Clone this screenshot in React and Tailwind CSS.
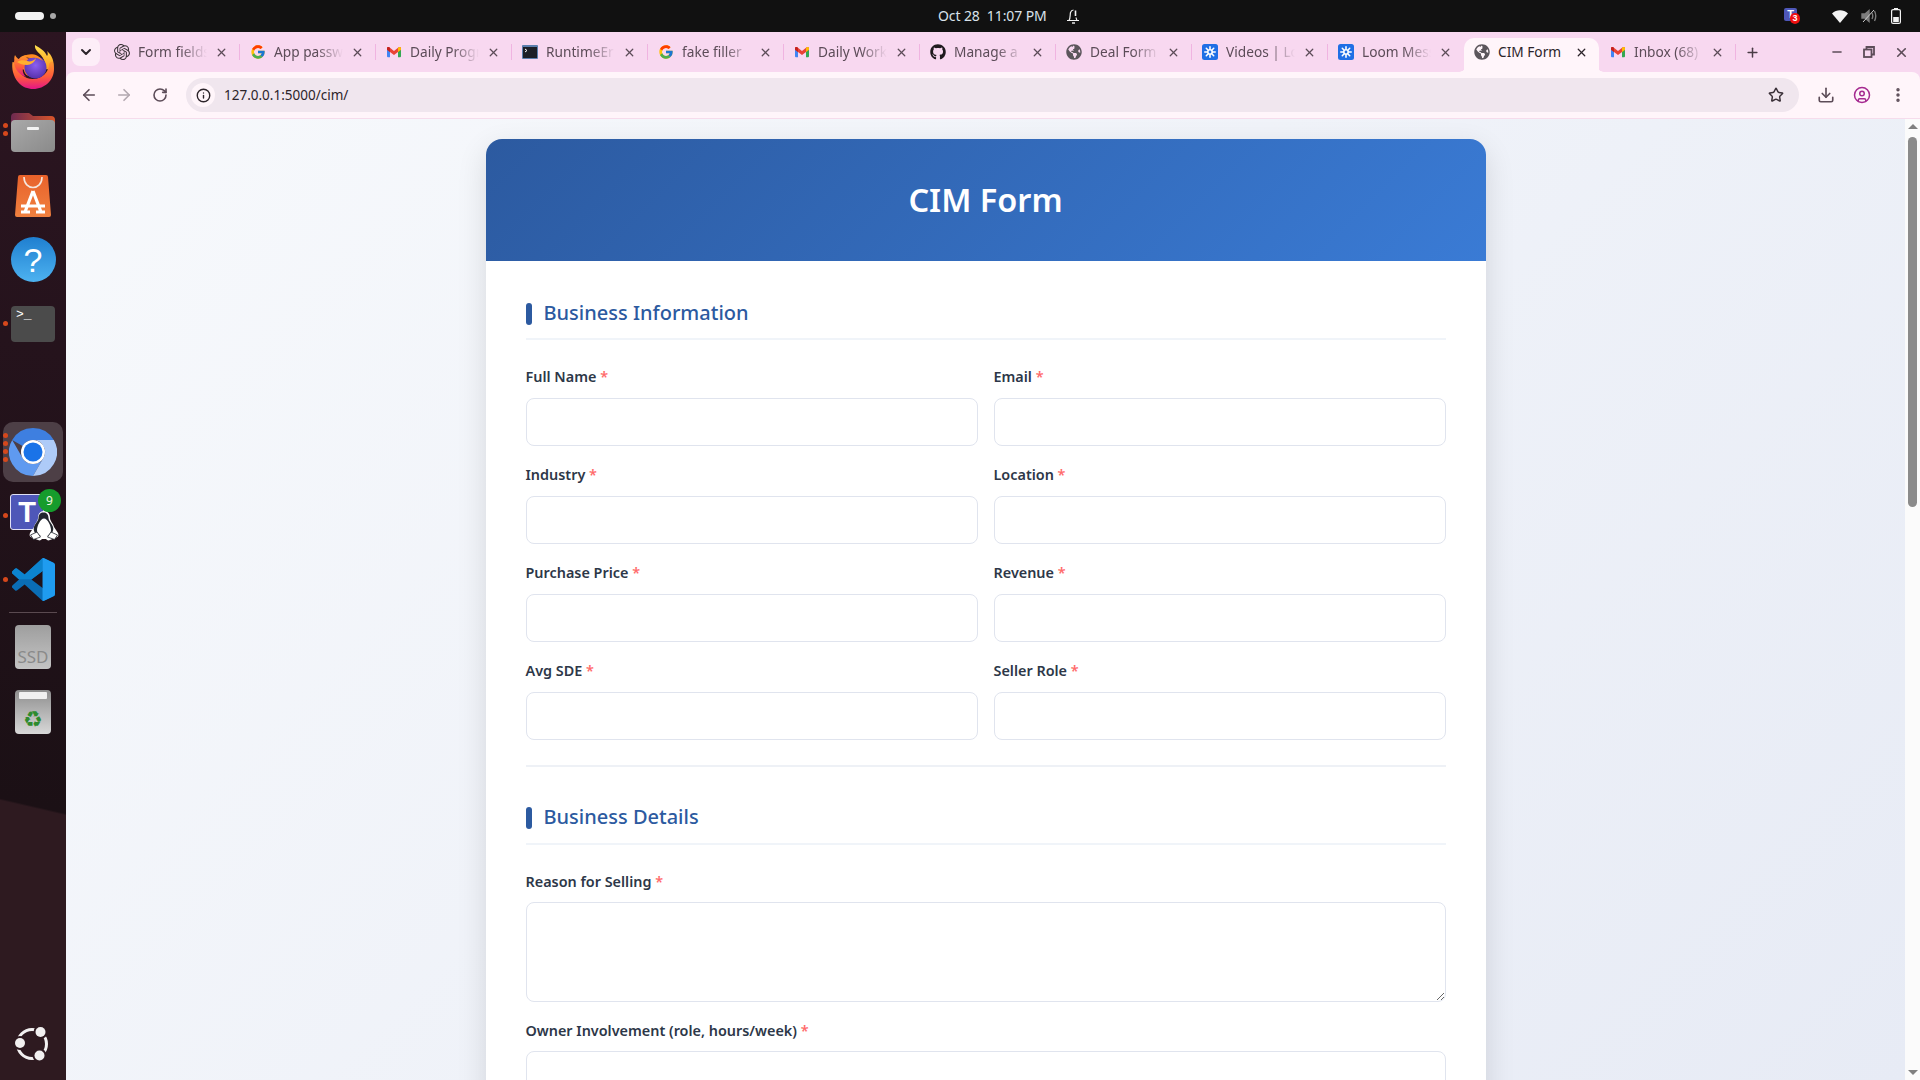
import React from "react";
import { ArrowLeft, ArrowRight, RotateCw, Star, Download, CircleUser, EllipsisVertical, X, Plus, Minus, Info, ChevronDown } from "lucide-react";
import { FcGoogle } from "react-icons/fc";
import { FaGithub, FaGlobeAmericas } from "react-icons/fa";
import { SiOpenai } from "react-icons/si";

const Gmail = () => (
  <svg viewBox="0 0 24 24" className="h-4 w-4">
    <path d="M1.5 7.5h4.5V20H3a1.5 1.5 0 0 1-1.5-1.5z" fill="#4285f4" />
    <path d="M18 7.5h4.5v11A1.5 1.5 0 0 1 21 20h-3z" fill="#34a853" />
    <path d="M1.5 6.5C1.5 4.5 3.5 4 5 5l7 5.5L19 5c1.5-1 3.5-.5 3.5 1.5v2L18 12l-6 4.5L6 12 1.5 8.5z" fill="#ea4335" />
    <path d="M18 6l1-1c1.500-1 3.500-.5 3.500 1.500v2L18 12z" fill="#fbbc04" />
    <path d="M1.500 6.500C1.500 4.500 3.500 4 5 5l1 1v6L1.500 8.500z" fill="#c5221f" />
  </svg>
);
const TerminalFav = () => (
  <svg viewBox="0 0 16 16" className="h-4 w-4">
    <rect x="0" y="1" width="16" height="14" rx="1" fill="#5b7fae" />
    <rect x="1" y="3" width="14" height="11" fill="#1d2027" />
    <path d="M3 5l2 1.500L3 8" stroke="#fff" fill="none" strokeWidth="1" />
  </svg>
);
const LoomFav = () => (
  <svg viewBox="0 0 16 16" className="h-4 w-4">
    <rect width="16" height="16" rx="2.500" fill="#1f6fe5" />
    <g stroke="#fff" strokeWidth="1.600" strokeLinecap="round">
      <path d="M8 2.800v2M8 11.200v2M2.800 8h2M11.200 8h2M4.300 4.300l1.400 1.400M10.300 10.300l1.400 1.400M4.300 11.700l1.400-1.400M10.300 5.700l1.400-1.400" />
    </g>
    <circle cx="8" cy="8" r="3" fill="#fff" />
    <circle cx="8" cy="8" r="1.400" fill="#1f6fe5" />
  </svg>
);
const Globe = () => <FaGlobeAmericas className="h-4 w-4 text-[#5c565c]" />;

const tabs = [
  { t: "Form fields", i: <SiOpenai className="h-4 w-4 text-[#3a3438]" /> },
  { t: "App passwords", i: <FcGoogle className="h-4 w-4" /> },
  { t: "Daily Progress", i: <Gmail /> },
  { t: "RuntimeError", i: <TerminalFav /> },
  { t: "fake filler", i: <FcGoogle className="h-4 w-4" /> },
  { t: "Daily Work", i: <Gmail /> },
  { t: "Manage a", i: <FaGithub className="h-4 w-4 text-[#1f1a1e]" /> },
  { t: "Deal Form", i: <Globe /> },
  { t: "Videos | Loom", i: <LoomFav /> },
  { t: "Loom Message", i: <LoomFav /> },
  { t: "CIM Form", i: <Globe />, active: true },
  { t: "Inbox (68)", i: <Gmail /> },
];

function Tab({ t, i, active, hideSep }) {
  return (
    <div className="flex h-[34px] w-[136px] shrink-0 items-center">
      <div className={"relative flex h-[34px] w-[135px] items-center pb-[6px] pl-[10px] pr-[10px] " + (active ? "rounded-t-[10px] bg-[#fff5fa] " : "")}>
        {active && (
          <>
            <span className="absolute bottom-0 left-[-5px] h-2 w-2 bg-[radial-gradient(circle_at_0_0,transparent_7.5px,#fff5fa_8px)]" />
            <span className="absolute bottom-0 right-[-5px] h-2 w-2 bg-[radial-gradient(circle_at_100%_0,transparent_7.5px,#fff5fa_8px)]" />
          </>
        )}
        <span className="flex h-4 w-4 shrink-0 items-center justify-center">{i}</span>
        <span className={"ml-2 w-[69px] shrink-0 overflow-hidden whitespace-nowrap text-[13.7px] " + (active ? "text-[#2c242a]" : "text-[#5c4c58] [mask-image:linear-gradient(to_right,black_62%,transparent_100%)]")}>
          {t}
        </span>
        <X className={"ml-2 h-[13px] w-[13px] shrink-0 " + (active ? "text-[#2c242a]" : "text-[#5c4c58]")} strokeWidth={2.4} />
      </div>
      <span className={"mb-[6px] h-4 w-px shrink-0 " + (hideSep ? "bg-transparent" : "bg-[#f0b4e1]")} />
    </div>
  );
}

const Firefox = () => (
  <svg viewBox="0 0 44 44" className="h-11 w-11">
    <defs>
      <linearGradient id="ffb" x1="0" y1="0" x2="0" y2="1">
        <stop offset="0" stopColor="#ff9a2e" />
        <stop offset="0.55" stopColor="#ff5a3c" />
        <stop offset="1" stopColor="#e31587" />
      </linearGradient>
      <linearGradient id="ffy" x1="0" y1="0" x2="0" y2="1">
        <stop offset="0" stopColor="#ffe14d" />
        <stop offset="1" stopColor="#ff9a1f" />
      </linearGradient>
      <radialGradient id="ffp" cx="0.5" cy="0.4" r="0.7">
        <stop offset="0" stopColor="#8b5ff0" />
        <stop offset="1" stopColor="#4f2aa0" />
      </radialGradient>
    </defs>
    <path d="M3 11c1 2 1 4 3 5 2-3 6-5 9-5-2 2-1 3 1 3 8-3 16 2 16 9 0 6-5 9-10 9-6 0-9-4-9-7L4 17z" fill="#ff7a2a" />
    <path d="M24 0c-1 6 6 8 9 15 2 5 1 9 1 9l8 1c2-8-1-15-6-19 1 2 1 4 0 5-2-5-7-8-12-11z" fill="url(#ffy)" />
    <path d="M1.500 17C.5 23 2 31 7 37c4 5 10 7 15 7 12 0 21-9 21-20 0-3-.5-5-1-7-1-1-3 0-4 2 0 8-7 15-16 15-9 0-14-6-15-12C6 19 3 17 1.500 17z" fill="url(#ffb)" />
    <path d="M3 17c1-3 0-5 1-7 1 2 3 4 4 4 2-3 5-4 8-4-1 1-1 2 0 3 3 1 1 3-1 4l-1 4c-4 3-2 8 1 11-6-2-12-8-12-15z" fill="url(#ffb)" />
    <circle cx="24.500" cy="22.500" r="11" fill="url(#ffp)" />
    <path d="M6 17c3-2 7-2 10-1 3 1 7 0 9-3-1 4-5 7-9 7-4 0-7-1-10-3z" fill="#ffb02e" />
    <path d="M13 11c5-3 14-3 19 5-4-3-8-4-11-3-3 0-5 0-8-2z" fill="#ff8a1f" />
  </svg>
);
const Folder = () => (
  <svg viewBox="0 0 44 40" className="h-10 w-11">
    <defs>
      <linearGradient id="fo" x1="0" y1="0" x2="1" y2="0">
        <stop offset="0" stopColor="#6e2a50" />
        <stop offset="1" stopColor="#d9552a" />
      </linearGradient>
      <linearGradient id="fg" x1="0" y1="0" x2="1" y2="1">
        <stop offset="0" stopColor="#a9a9a9" />
        <stop offset="1" stopColor="#8a8a8a" />
      </linearGradient>
    </defs>
    <path d="M0 5a4 4 0 0 1 4-4h14l4 3h18a4 4 0 0 1 4 4v12H0z" fill="url(#fo)" />
    <rect x="0" y="8" width="44" height="32" rx="4" fill="url(#fg)" />
    <rect x="16" y="15" width="12" height="3" rx="1" fill="#f2f2f2" />
  </svg>
);
const Store = () => (
  <svg viewBox="0 0 36 42" className="h-[42px] w-9">
    <defs>
      <linearGradient id="st" x1="0" y1="0" x2="0" y2="1">
        <stop offset="0" stopColor="#e8622b" />
        <stop offset="1" stopColor="#f0803f" />
      </linearGradient>
    </defs>
    <path d="M3 2a2 2 0 0 1 2-2h26a2 2 0 0 1 2 2l3 38a2 2 0 0 1-2 2H2a2 2 0 0 1-2-2z" fill="url(#st)" />
    <path d="M9 2c0 14 18 14 18 0" fill="none" stroke="#f5e6dc" strokeWidth="1.600" />
    <path d="M18 16L10 37M18 16l8 21M6 31h24M15 37H6M30 37h-9" stroke="#fff" strokeWidth="3.200" fill="none" />
  </svg>
);
const Chromium = () => (
  <svg viewBox="0 0 48 48" className="h-12 w-12">
    <path d="M24 0A24 24 0 0 1 44.800 12H24a12 12 0 0 0-10.400 6L3.200 12A24 24 0 0 1 24 0z" fill="#3e7fe0" />
    <path d="M3.200 12A24 24 0 0 0 24 48l10.400-18a12 12 0 0 1-20.800 0z" fill="#5f9af0" />
    <path d="M44.800 12A24 24 0 0 1 24 48l10.400-18A12 12 0 0 0 24 12z" fill="#aecbf8" />
    <circle cx="24" cy="24" r="12" fill="#fff" />
    <circle cx="24" cy="24" r="9.500" fill="#1a73e8" />
  </svg>
);
const Teams = () => (
  <div className="relative h-[52px] w-12">
    <div className="absolute left-0 top-[5px] flex h-9 w-[34px] items-center justify-center rounded-[3px] border border-[#dfe0f5] bg-[#4e57b8] font-['Liberation_Sans',sans-serif] text-[29px] font-bold leading-none text-white">T</div>
    <svg viewBox="0 0 30 30" className="absolute left-[19px] top-[22px] h-[30px] w-[30px]">
      <path d="M15 0c4 0 6 3 6 7 0 3 3 5 4 9l4 6c1 3 0 4-3 5l-5 2c-2 1-3 0-4-1h-4c-1 1-2 2-4 1l-5-2c-3-1-4-2-3-5l4-6c1-4 4-6 4-9 0-4 2-7 6-7z" fill="#fff" />
      <path d="M15 1.500c3 0 4.500 2.500 4.500 5.500 0 3 3.500 5.500 4.500 9 1 3-1 7-3 8-2 1-11 1-13 0-2-1-4-5-3-8 1-3.500 4.500-6 4.500-9 0-3 1.500-5.500 4.500-5.500z" fill="#22262e" />
      <path d="M15 7.500c3.500 0 7 7.500 7 11.500s-3.500 6.500-7 6.500-7-2.500-7-6.500 3.500-11.500 7-11.500z" fill="#fff" />
      <path d="M1.500 24l6.500-3 3.500 5-7 2.500zM28.500 24l-6.500-3-3.500 5 7 2.500z" fill="#fff" stroke="#22262e" strokeWidth=".8" />
    </svg>
    <div className="absolute left-[28px] top-0 flex h-[23px] w-[23px] items-center justify-center rounded-full bg-[#169c2c] font-['Noto_Sans',sans-serif] text-[12px] text-[#f4f4e0]">9</div>
  </div>
);
const VSCode = () => (
  <svg viewBox="0 0 100 100" className="h-[43px] w-[43px]">
    <defs>
      <clipPath id="vr"><rect x="71" y="0" width="29" height="100" /></clipPath>
      <clipPath id="vt"><rect x="0" y="0" width="71" height="50" /></clipPath>
    </defs>
    <path d="M96.500 10.800 75.900.9a6.200 6.200 0 0 0-7.100 1.200L29.400 38.100 12.200 25a4.200 4.200 0 0 0-5.300.2l-5.500 5a4.200 4.200 0 0 0 0 6.200L16.300 50 1.400 63.600a4.200 4.200 0 0 0 0 6.200l5.500 5a4.200 4.200 0 0 0 5.300.2l17.200-13.100 39.400 36a6.200 6.200 0 0 0 7.100 1.200l20.600-9.900a6.200 6.200 0 0 0 3.500-5.600V16.400a6.200 6.200 0 0 0-3.500-5.600zM75 72.700 45.100 50 75 27.300z" fill="#0a6db5" />
    <path d="M96.500 10.800 75.900.9a6.200 6.200 0 0 0-7.100 1.200L29.400 38.100 12.200 25a4.200 4.200 0 0 0-5.300.2l-5.500 5a4.200 4.200 0 0 0 0 6.200L16.300 50 45.100 50 75 27.300z" fill="#0c84cf" clipPath="url(#vt)" />
    <path d="M96.500 10.800 75.900.9a6.200 6.200 0 0 0-7.100 1.200L68 3v94l.8.9a6.200 6.200 0 0 0 7.100 1.200l20.600-9.900a6.200 6.200 0 0 0 3.500-5.600V16.400a6.200 6.200 0 0 0-3.500-5.600z" fill="#1f9cf0" clipPath="url(#vr)" />
  </svg>
);
const UbuntuLogo = () => (
  <svg viewBox="0 0 36 36" className="h-9 w-9">
    <circle cx="17" cy="17" r="14.500" fill="none" stroke="#f2f0f0" strokeWidth="3" />
    <circle cx="25.500" cy="5" r="7" fill="#2e1a20" />
    <circle cx="5" cy="16" r="7" fill="#2e1a20" />
    <circle cx="24.500" cy="28.500" r="7" fill="#2e1a20" />
    <circle cx="25.500" cy="5" r="5" fill="#f2f0f0" />
    <circle cx="5" cy="16" r="5" fill="#f2f0f0" />
    <circle cx="24.500" cy="28.500" r="5" fill="#f2f0f0" />
  </svg>
);

function Dots({ n, top }) {
  return (
    <span className={"absolute left-[3px] flex flex-col gap-[3px] " + top}>
      {Array.from({ length: n }).map((_, k) => (
        <span key={k} className="h-[5px] w-[5px] rounded-full bg-[#d6481c]" />
      ))}
    </span>
  );
}

function Dock() {
  return (
    <aside className="relative flex w-[66px] shrink-0 flex-col items-center bg-[linear-gradient(193deg,#2c1521_0%,#1b1015_73.5%,#2e1a20_73.7%,#2e1a20_100%)] pt-[13px]">
      <Firefox />
      <div className="relative mt-[23px] flex h-10 w-full justify-center">
        <Dots n={2} top="top-[11px]" />
        <Folder />
      </div>
      <div className="mt-[23px]"><Store /></div>
      <div className="mt-5 flex h-[45px] w-[45px] items-center justify-center rounded-full bg-[linear-gradient(#1f7fd0,#4db2f0)] font-['Liberation_Sans',sans-serif] text-[34px] leading-none text-white">?</div>
      <div className="relative mt-[24px] flex h-9 w-full justify-center">
        <Dots n={1} top="top-[15px]" />
        <div className="h-9 w-11 rounded-[4px] bg-[#4b4b4b] pl-[5px] font-['Liberation_Mono',monospace] text-[13px] leading-[17px] text-white">&gt;_</div>
      </div>
      <div className="relative mt-[80px] flex h-[60px] w-[60px] items-center justify-center rounded-[10px] bg-[#4d3f46]">
        <span className="absolute left-0 top-[11px] flex flex-col gap-[3px]">
          {[0, 1, 2, 3].map((k) => <span key={k} className="h-[5px] w-[5px] rounded-full bg-[#d6481c]" />)}
        </span>
        <Chromium />
      </div>
      <div className="relative mt-[7px] flex h-[52px] w-full justify-center pl-[2px]">
        <Dots n={1} top="top-[24px]" />
        <Teams />
      </div>
      <div className="relative mt-[17px] flex h-[43px] w-full justify-center">
        <Dots n={1} top="top-[19px]" />
        <VSCode />
      </div>
      <div className="mt-[11px] h-px w-12 bg-[#5a4a50]" />
      <div className="mt-[12px] flex h-[44px] w-9 items-end justify-center overflow-hidden rounded-[4px] bg-[linear-gradient(#9e9e9e,#c4c4c4)] font-['Noto_Sans',sans-serif] text-[17px] leading-[24px] text-[#8a8a8a]">SSD</div>
      <div className="relative mt-[21px] flex h-[44px] w-9 items-end justify-center rounded-[4px] bg-[linear-gradient(#8e8e8e,#d8d8d8)] pb-[1px] font-['DejaVu_Sans',sans-serif] text-[22px] leading-[26px] text-[#2e8b2e]">
        <span className="absolute left-[4px] right-[4px] top-[2px] h-[7px] rounded-[1px] bg-[#f0f0f0]" />
        ♻
      </div>
      <div className="mb-[17px] mt-auto"><UbuntuLogo /></div>
    </aside>
  );
}

function TopBar() {
  return (
    <header className="flex h-8 shrink-0 items-center bg-[#111111] font-['Noto_Sans',sans-serif]">
      <div className="flex w-[938px] items-center pl-[15px]">
        <span className="h-2 w-[29px] rounded-full bg-[#f2f2f2]" />
        <span className="ml-[6px] h-[6px] w-[6px] rounded-full bg-[#a8a8a8]" />
      </div>
      <span className="whitespace-pre pb-[2px] text-[14px] tracking-[-0.1px] text-[#d9e2ea]">Oct 28  11:07 PM</span>
      <svg viewBox="0 0 14 16" className="ml-[19px] h-4 w-[14px]" fill="none" stroke="#f2f2f2" strokeWidth="1.200">
        <path d="M1 12.500h12M3 12.500c1.500-2 1-6 1.500-8C5 3 6 2 7.500 2" />
        <path d="M9.500 2.500v5.500" strokeWidth="1.600" />
        <path d="M11 12.500c-.5-1-.8-2-.9-3" />
        <path d="M6 15h3" strokeWidth="1.400" />
      </svg>
      <div className="ml-auto flex items-center pr-[19px]">
        <div className="relative h-[18px] w-4">
          <span className="absolute left-0 top-[1px] flex h-[13px] w-[13px] items-center justify-center rounded-[2px] bg-[#4e57b8] font-['Liberation_Sans',sans-serif] text-[11px] font-bold leading-none text-white">T</span>
          <span className="absolute left-[6px] top-[6px] flex h-[11px] w-[10px] items-center justify-center rounded-full bg-[#ee1111] font-['Liberation_Sans',sans-serif] text-[9px] font-bold leading-none text-white">3</span>
        </div>
        <svg viewBox="0 0 16 14" className="ml-[32px] h-[14px] w-4"><path d="M0 4.500C4.500.2 11.500.2 16 4.500L8 14z" fill="#f4f4f4" /></svg>
        <svg viewBox="0 0 16 16" className="ml-[13px] h-4 w-4" fill="none" stroke="#7c7c7c" strokeWidth="1.400">
          <path d="M1 6h3l4-3.500v11L4 10H1z" fill="#7c7c7c" />
          <path d="M11 5c1 2 1 4 0 6M13.500 3c1.500 3 1.500 7 0 10" />
          <path d="M2 14L13 2" stroke="#d0d0d0" strokeWidth="1" />
        </svg>
        <svg viewBox="0 0 10 16" className="ml-[14px] h-4 w-[10px]">
          <rect x="3" y="0" width="4" height="2" fill="#f2f2f2" />
          <rect x=".6" y="1.600" width="8.800" height="13.800" rx="1.500" fill="none" stroke="#f2f2f2" strokeWidth="1.200" />
          <rect x="2.200" y="9" width="5.600" height="5" fill="#f2f2f2" />
        </svg>
      </div>
    </header>
  );
}

function TabStrip() {
  return (
    <div className="flex h-10 shrink-0 items-end bg-[#f8d8f0] font-['Noto_Sans',sans-serif]">
      <div className="mb-[6px] ml-[6px] mr-[4px] flex h-7 w-7 shrink-0 items-center justify-center rounded-lg bg-[#fdeef8]">
        <ChevronDown className="h-4 w-4 text-[#2c242a]" strokeWidth={3} />
      </div>
      {tabs.map((x, k) => (
        <Tab key={k} {...x} hideSep={k === 9 || k === 10} />
      ))}
      <div className="flex h-[34px] w-[30px] shrink-0 items-center pb-[6px] pl-[9px]">
        <Plus className="h-[15px] w-[15px] text-[#4a3c46]" strokeWidth={2.4} />
      </div>
      <div className="ml-auto flex h-[34px] items-center pb-[6px] pr-[11px] text-[#5c4c58]">
        <Minus className="h-[14px] w-[14px]" strokeWidth={2.6} />
        <svg viewBox="0 0 12 12" className="ml-[19px] h-3 w-3" fill="none" stroke="#5c4c58" strokeWidth="1.800">
          <rect x="1" y="3.500" width="7.500" height="7.500" />
          <path d="M3.500 3.500V1H11v7.500H8.500" />
        </svg>
        <X className="ml-[19px] h-[15px] w-[15px]" strokeWidth={2.6} />
      </div>
    </div>
  );
}

function ToolBar() {
  return (
    <div className="flex h-[47px] shrink-0 items-center rounded-t-[8px] border-b border-[#f6dcec] bg-[#fff5fa] font-['Noto_Sans',sans-serif] text-[#5c4c58]">
      <ArrowLeft className="ml-[14px] h-[18px] w-[18px]" strokeWidth={2.2} />
      <ArrowRight className="ml-[17px] h-[18px] w-[18px] text-[#b3a8b0]" strokeWidth={2.2} />
      <RotateCw className="ml-[19px] h-4 w-4" strokeWidth={2.4} />
      <div className="ml-[18px] flex h-[34px] w-[1613px] items-center rounded-full bg-[#f0e6ee]">
        <span className="ml-[5px] flex h-6 w-6 items-center justify-center rounded-full bg-[#fff5fa]">
          <Info className="h-[15px] w-[15px] text-[#2c242a]" strokeWidth={2.2} />
        </span>
        <span className="ml-[9px] text-[13.5px] text-[#2c242a]">127.0.0.1:5000/cim/</span>
        <Star className="ml-auto mr-[15px] h-4 w-4 text-[#3a3038]" strokeWidth={2.2} />
      </div>
      <Download className="ml-[18px] h-[18px] w-[18px]" strokeWidth={2.2} />
      <CircleUser className="ml-[18px] h-[18px] w-[18px] text-[#a52a90]" strokeWidth={2} />
      <EllipsisVertical className="ml-[18px] h-[18px] w-[18px]" strokeWidth={2.6} />
    </div>
  );
}

const labelCls = "block h-5 text-[14.4px] font-semibold leading-5 text-[#2d3748]";
const boxCls = "block w-full rounded-lg border border-[#e0e4ee] bg-white outline-none";

function Field({ label }) {
  return (
    <div>
      <label className={labelCls + " mb-[11px]"}>
        {label} <span className="text-[#ff6b6b]">*</span>
      </label>
      <input type="text" className={boxCls + " h-12"} />
    </div>
  );
}

function AreaField({ label }) {
  return (
    <div>
      <label className={labelCls + " mb-[10px]"}>
        {label} <span className="text-[#ff6b6b]">*</span>
      </label>
      <textarea className={boxCls + " h-[100px] resize-y"} />
    </div>
  );
}

function SectionTitle({ children, tall }) {
  return (
    <h2 className={"flex items-center border-b-2 border-[#f0f4f9] text-[20px] font-medium text-[#2c5aa0] " + (tall ? "h-[43px] pb-[9px]" : "h-[42px] pb-2")}>
      <span className="mr-3 h-[22px] w-[6px] rounded-[3px] bg-[#2c5aa0]" />
      <span className="pb-[2px]">{children}</span>
    </h2>
  );
}

function Page() {
  return (
    <div className="flex min-h-0 flex-1">
      <main className="min-w-0 flex-1 overflow-hidden bg-[linear-gradient(135deg,#f7f9fc,#e7ebf5)] pt-5 font-['Noto_Sans',sans-serif]">
        <div className="mx-auto w-[1000px] overflow-hidden rounded-t-2xl bg-white shadow-[0_10px_30px_rgba(0,0,0,0.12)]">
          <div className="flex h-[122px] items-center justify-center bg-[linear-gradient(135deg,#2c5aa0,#3a7bd5)] text-[32.5px] font-semibold text-white">
            CIM Form
          </div>
          <div className="px-10 pt-[37px]">
            <SectionTitle>Business Information</SectionTitle>
            <div className="mt-[27px] grid grid-cols-2 gap-x-4 gap-y-[19px]">
              <Field label="Full Name" />
              <Field label="Email" />
              <Field label="Industry" />
              <Field label="Location" />
              <Field label="Purchase Price" />
              <Field label="Revenue" />
              <Field label="Avg SDE" />
              <Field label="Seller Role" />
            </div>
            <div className="mt-[25px] h-[2px] bg-[#eef1f6]" />
            <div className="pt-[35px]">
              <SectionTitle tall>Business Details</SectionTitle>
            </div>
            <div className="mt-[27px] flex flex-col gap-[19px]">
              <AreaField label="Reason for Selling" />
              <AreaField label="Owner Involvement (role, hours/week)" />
            </div>
          </div>
        </div>
      </main>
      <div className="flex w-[15px] shrink-0 flex-col items-center bg-[#fbfbfb]">
        <svg viewBox="0 0 10 5" className="mt-[5px] h-[5px] w-[10px]"><path d="M5 0l5 5H0z" fill="#808080" /></svg>
        <div className="mt-[8px] h-[370px] w-[9px] rounded-full bg-[#8b8b8b]" />
        <svg viewBox="0 0 10 5" className="mb-[5px] mt-auto h-[5px] w-[10px]"><path d="M0 0h10L5 5z" fill="#808080" /></svg>
      </div>
    </div>
  );
}

export default function App() {
  return (
    <div className="flex h-screen w-screen flex-col overflow-hidden bg-[#111111]">
      <TopBar />
      <div className="flex min-h-0 flex-1">
        <Dock />
        <div className="flex min-w-0 flex-1 flex-col bg-[#f8d8f0]">
          <TabStrip />
          <ToolBar />
          <Page />
        </div>
      </div>
    </div>
  );
}
